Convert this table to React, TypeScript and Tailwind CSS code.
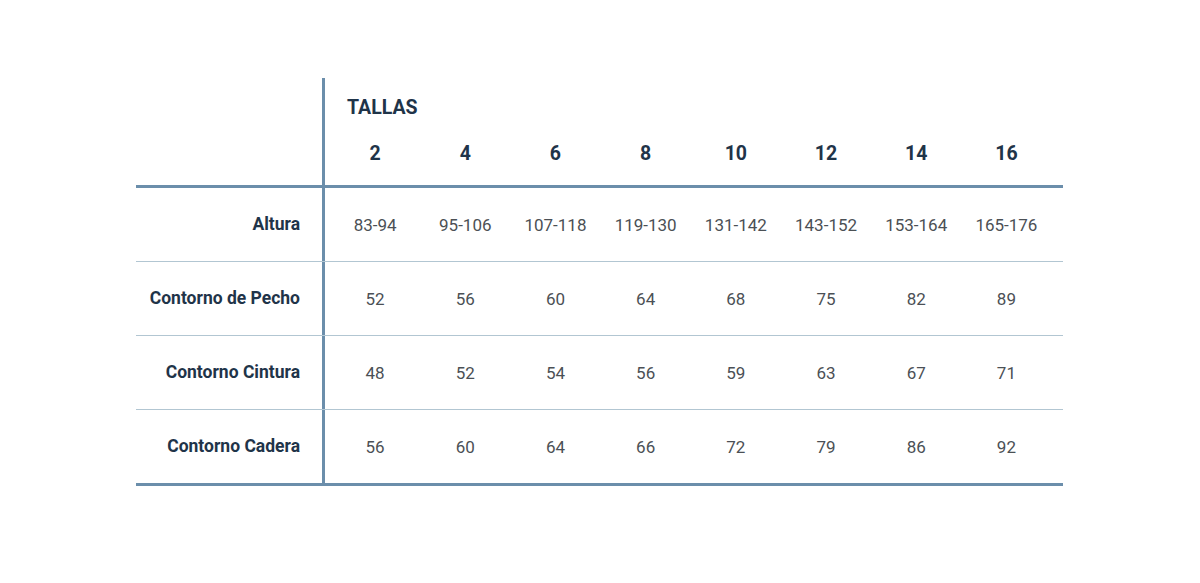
const sizes = ["2", "4", "6", "8", "10", "12", "14", "16"];

const rows = [
  { label: "Altura", values: ["83-94", "95-106", "107-118", "119-130", "131-142", "143-152", "153-164", "165-176"] },
  { label: "Contorno de Pecho", values: ["52", "56", "60", "64", "68", "75", "82", "89"] },
  { label: "Contorno Cintura", values: ["48", "52", "54", "56", "59", "63", "67", "71"] },
  { label: "Contorno Cadera", values: ["56", "60", "64", "66", "72", "79", "86", "92"] },
];

export default function App() {
  return (
    <div className="w-[1200px] h-[583px] bg-white pt-[78px] pl-[136px] font-['Roboto',sans-serif]">
      <div className="w-[927px]">
        {/* header */}
        <div className="flex h-[110px] border-b-[3px] border-[#6b8eab]">
          <div className="w-[189px] shrink-0 border-r-[3px] border-[#6b8eab]" />
          <div className="flex flex-col pl-[5px]">
            <div className="pl-[17px] pt-[19px] text-[19.5px] font-bold leading-[22px] text-[#1f3449]">TALLAS</div>
            <div className="flex pt-[24px]">
              {sizes.map((s) => (
                <div key={s} className="w-[90.2px] text-center text-[19.5px] font-bold leading-[22px] text-[#1f3449]">
                  {s}
                </div>
              ))}
            </div>
          </div>
        </div>
        {/* body */}
        {rows.map((r, i) => (
          <div
            key={r.label}
            className={
              i === rows.length - 1
                ? "flex h-[76px] border-b-[3px] border-[#6b8eab]"
                : "flex h-[74px] border-b border-[#b2c6d2]"
            }
          >
            <div className="flex w-[189px] shrink-0 items-center justify-end border-r-[3px] border-[#6b8eab] pr-[22px] text-[17.5px] font-bold text-[#1f3449]">
              {r.label}
            </div>
            <div className="flex items-center pl-[5px] pt-[3px]">
              {r.values.map((v, j) => (
                <div key={j} className="w-[90.2px] text-center text-[17px] text-[#4b5055]">
                  {v}
                </div>
              ))}
            </div>
          </div>
        ))}
      </div>
    </div>
  );
}
